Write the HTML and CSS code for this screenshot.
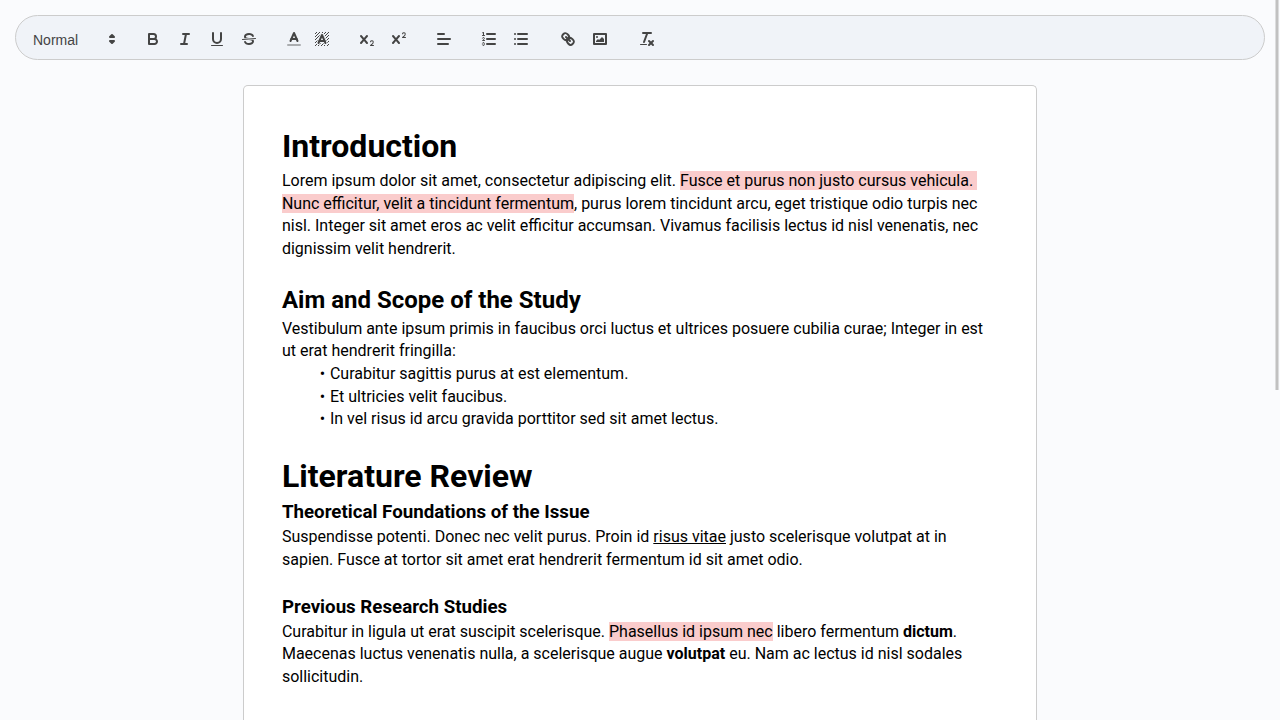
FILE: index.html
```
<!DOCTYPE html>
<html lang="en">
<head>
<meta charset="utf-8">
<title>Document editor</title>
<link rel="stylesheet" href="styles.css">
</head>
<body>
<div class="toolbar">
  <span class="group">
    <span class="picker header-picker"><span class="picker-text">Normal</span><svg viewBox="0 0 18 18"><polygon class="st" points="7 11 9 13 11 11 7 11"/><polygon class="st" points="7 7 9 5 11 7 7 7"/></svg></span>
  </span>
  <span class="group">
    <button class="tool" aria-label="Bold"><svg viewBox="0 0 18 18"><path class="st" d="M5,4H9.5A2.5,2.5,0,0,1,12,6.5v0A2.5,2.5,0,0,1,9.5,9H5A0,0,0,0,1,5,9V4A0,0,0,0,1,5,4Z"/><path class="st" d="M5,9h5.5A2.5,2.5,0,0,1,13,11.5v0A2.5,2.5,0,0,1,10.5,14H5a0,0,0,0,1,0,0V9A0,0,0,0,1,5,9Z"/></svg></button>
    <button class="tool" aria-label="Italic"><svg viewBox="0 0 18 18"><line class="st" x1="7" x2="13" y1="4" y2="4"/><line class="st" x1="5" x2="11" y1="14" y2="14"/><line class="st" x1="8" x2="10" y1="14" y2="4"/></svg></button>
    <button class="tool" aria-label="Underline"><svg viewBox="0 0 18 18"><path class="st" d="M5,3V9a4.012,4.012,0,0,0,4,4H9a4.012,4.012,0,0,0,4-4V3"/><rect class="fl" height="1" rx="0.5" ry="0.5" width="12" x="3" y="15"/></svg></button>
    <button class="tool" aria-label="Strike"><svg viewBox="0 0 18 18"><line class="st thin" x1="15.5" x2="2.5" y1="8.5" y2="9.5"/><path class="fl" d="M9.007,8C6.542,7.791,6,7.519,6,6.5,6,5.792,7.283,5,9,5c1.571,0,2.765.679,2.969,1.309a1,1,0,0,0,1.9-.617C13.356,4.106,11.354,3,9,3,6.2,3,4,4.538,4,6.5a3.2,3.2,0,0,0,.5,1.843Z"/><path class="fl" d="M8.984,10C11.457,10.208,12,10.479,12,11.5c0,0.708-1.283,1.5-3,1.5-1.571,0-2.765-.679-2.969-1.309a1,1,0,1,0-1.9.617C4.644,13.894,6.646,15,9,15c2.8,0,5-1.538,5-3.5a3.2,3.2,0,0,0-.5-1.843Z"/></svg></button>
  </span>
  <span class="group">
    <span class="picker icon-picker"><svg viewBox="0 0 18 18"><line class="st faint" x1="3" x2="15" y1="15" y2="15"/><polyline class="st" points="5.5 11 9 3 12.5 11"/><line class="st" x1="11.63" x2="6.38" y1="9" y2="9"/></svg></span>
    <span class="picker icon-picker"><svg viewBox="0 0 18 18"><defs><pattern id="hatch" width="3" height="3" patternUnits="userSpaceOnUse"><path class="fl" d="M0,2h1v1h-1zM1,1h1v1h-1zM2,0h1v1h-1z"/></pattern><mask id="halo"><rect width="18" height="18" fill="white"/><path d="M5.5,13L9,5L12.5,13M11.63,11H6.38" fill="none" stroke="black" stroke-width="4" stroke-linecap="round" stroke-linejoin="round"/></mask></defs><rect x="2" y="2" width="14" height="14" fill="url(#hatch)" mask="url(#halo)"/><polyline class="st" points="5.5 13 9 5 12.5 13"/><line class="st" x1="11.63" x2="6.38" y1="11" y2="11"/></svg></span>
  </span>
  <span class="group">
    <button class="tool" aria-label="Subscript"><svg viewBox="0 0 18 18"><path class="fl" d="M15.5,15H13.861a3.858,3.858,0,0,0,1.914-2.975,1.8,1.8,0,0,0-1.6-1.751A1.921,1.921,0,0,0,12.021,11.7a0.5,0.5,0,1,0,.957.291h0a0.914,0.914,0,0,1,1.053-.725,0.81,0.81,0,0,1,.744.762c0,1.076-1.17,1.87-1.94,2.431A1.456,1.456,0,0,0,12,15.5a0.5,0.5,0,0,0,.5.5h3A0.5,0.5,0,0,0,15.5,15Z"/><path class="fl" d="M9.65,5.241a1,1,0,0,0-1.409.108L6,7.964,3.759,5.349A1,1,0,0,0,2.192,6.592Q2.215,6.621,2.241,6.649L4.684,9.5,2.241,12.35A1,1,0,0,0,3.71,13.707q0.026-.028.049-0.057L6,11.036,8.241,13.65a1,1,0,1,0,1.567-1.243Q9.785,12.378,9.759,12.35L7.316,9.5,9.759,6.651A1,1,0,0,0,9.65,5.241Z"/></svg></button>
    <button class="tool" aria-label="Superscript"><svg viewBox="0 0 18 18"><path class="fl" d="M15.5,7H13.861a4.015,4.015,0,0,0,1.914-2.975,1.8,1.8,0,0,0-1.6-1.751A1.922,1.922,0,0,0,12.021,3.7a0.5,0.5,0,1,0,.957.291,0.917,0.917,0,0,1,1.053-.725,0.81,0.81,0,0,1,.744.762c0,1.077-1.164,1.925-1.934,2.486A1.423,1.423,0,0,0,12,7.5a0.5,0.5,0,0,0,.5.5h3A0.5,0.5,0,0,0,15.5,7Z"/><path class="fl" d="M9.65,5.241a1,1,0,0,0-1.409.108L6,7.964,3.759,5.349A1,1,0,0,0,2.192,6.592Q2.215,6.621,2.241,6.649L4.684,9.5,2.241,12.35A1,1,0,0,0,3.71,13.707q0.026-.028.049-0.057L6,11.036,8.241,13.65a1,1,0,1,0,1.567-1.243Q9.785,12.378,9.759,12.35L7.316,9.5,9.759,6.651A1,1,0,0,0,9.65,5.241Z"/></svg></button>
  </span>
  <span class="group">
    <span class="picker icon-picker"><svg viewBox="0 0 18 18"><line class="st" x1="3" x2="15" y1="9" y2="9"/><line class="st" x1="3" x2="13" y1="14" y2="14"/><line class="st" x1="3" x2="9" y1="4" y2="4"/></svg></span>
  </span>
  <span class="group">
    <button class="tool" aria-label="Numbered list"><svg viewBox="0 0 18 18"><line class="st" x1="7" x2="15" y1="4" y2="4"/><line class="st" x1="7" x2="15" y1="9" y2="9"/><line class="st" x1="7" x2="15" y1="14" y2="14"/><line class="st thin" x1="2.5" x2="4.5" y1="5.5" y2="5.5"/><path class="fl" d="M3.5,6A0.5,0.5,0,0,1,3,5.5V3.085l-0.276.138A0.5,0.5,0,0,1,2.053,3c-0.124-.247-0.023-0.324.224-0.447l1-.5A0.5,0.5,0,0,1,4,2.5v3A0.5,0.5,0,0,1,3.5,6Z"/><path class="st thin" d="M4.5,10.5h-2c0-.234,1.85-1.076,1.85-2.234A0.959,0.959,0,0,0,2.5,8.156"/><path class="st thin" d="M2.5,14.846a0.959,0.959,0,0,0,1.85-.109A0.7,0.7,0,0,0,3.75,14a0.688,0.688,0,0,0,.6-0.736,0.959,0.959,0,0,0-1.85-.109"/></svg></button>
    <button class="tool" aria-label="Bulleted list"><svg viewBox="0 0 18 18"><line class="st" x1="6" x2="15" y1="4" y2="4"/><line class="st" x1="6" x2="15" y1="9" y2="9"/><line class="st" x1="6" x2="15" y1="14" y2="14"/><line class="st" x1="3" x2="3" y1="4" y2="4"/><line class="st" x1="3" x2="3" y1="9" y2="9"/><line class="st" x1="3" x2="3" y1="14" y2="14"/></svg></button>
  </span>
  <span class="group">
    <button class="tool" aria-label="Link"><svg viewBox="0 0 18 18"><line class="st" x1="7" x2="11" y1="7" y2="11"/><path class="st" d="M8.9,4.577a3.476,3.476,0,0,1,.36,4.679A3.476,3.476,0,0,1,4.577,8.9C3.185,7.5,2.035,6.4,4.217,4.217S7.5,3.185,8.9,4.577Z"/><path class="st" d="M13.423,9.1a3.476,3.476,0,0,0-4.679-.36,3.476,3.476,0,0,0,.36,4.679c1.392,1.392,2.5,2.542,4.679.36S14.815,10.5,13.423,9.1Z"/></svg></button>
    <button class="tool" aria-label="Image"><svg viewBox="0 0 18 18"><rect class="st" height="10" width="12" x="3" y="4"/><circle class="fl" cx="6" cy="7" r="1"/><polyline class="fl" points="5 12 5 11 7 9 8 10 11 7 13 9 13 12 5 12"/></svg></button>
  </span>
  <span class="group">
    <button class="tool" aria-label="Clear formatting"><svg viewBox="0 0 18 18"><line class="st" x1="5" x2="13" y1="3" y2="3"/><line class="st" x1="6" x2="9.35" y1="12" y2="3"/><line class="st" x1="11" x2="15" y1="11" y2="15"/><line class="st" x1="15" x2="11" y1="11" y2="15"/><rect class="fl" height="1" rx="0.5" ry="0.5" width="7" x="2" y="14"/></svg></button>
  </span>
</div>
<main class="page">
  <h1>Introduction</h1>
  <p>Lorem ipsum dolor sit amet, consectetur adipiscing elit. <span class="mark">Fusce et purus non justo cursus vehicula. Nunc efficitur, velit a tincidunt fermentum</span>, purus lorem tincidunt arcu, eget tristique odio turpis nec nisl. Integer sit amet eros ac velit efficitur accumsan. Vivamus facilisis lectus id nisl venenatis, nec dignissim velit hendrerit.</p>
  <p><br></p>
  <h2>Aim and Scope of the Study</h2>
  <p>Vestibulum ante ipsum primis in faucibus orci luctus et ultrices posuere cubilia curae; Integer in est ut erat hendrerit fringilla:</p>
  <ul>
    <li>Curabitur sagittis purus at est elementum.</li>
    <li>Et ultricies velit faucibus.</li>
    <li>In vel risus id arcu gravida porttitor sed sit amet lectus.</li>
  </ul>
  <p><br></p>
  <h1>Literature Review</h1>
  <h3>Theoretical Foundations of the Issue</h3>
  <p>Suspendisse potenti. Donec nec velit purus. Proin id <u>risus vitae</u> justo scelerisque volutpat at in sapien. Fusce at tortor sit amet erat hendrerit fermentum id sit amet odio.</p>
  <p><br></p>
  <h3>Previous Research Studies</h3>
  <p>Curabitur in ligula ut erat suscipit scelerisque. <span class="mark">Phasellus id ipsum nec</span> libero fermentum <strong>dictum</strong>. Maecenas luctus venenatis nulla, a scelerisque augue <strong>volutpat</strong> eu. Nam ac lectus id nisl sodales sollicitudin.</p>
</main>
<div class="scroll-thumb"></div>
</body>
</html>
```
FILE: styles.css
```
* {
  box-sizing: border-box;
}

html,
body {
  height: 100%;
}

body {
  display: flex;
  flex-direction: column;
  margin: 0;
  padding: 15px 15px 0;
  overflow: hidden;
  background: #fafbfd;
  color: #000;
  font-family: Roboto, sans-serif;
}

.toolbar {
  display: flex;
  flex: none;
  height: 45px;
  padding: 11px 8px 8px;
  border: 1px solid #ccc;
  border-radius: 25px;
  background: #f0f3f8;
  color: #444;
  font-family: "Liberation Sans", Arial, sans-serif;
}

.group {
  display: flex;
  margin-right: 15px;
}

.tool {
  width: 28px;
  height: 24px;
  margin: 0 2px;
  padding: 3px 5px;
  border: 0;
  background: none;
}

.toolbar svg {
  display: block;
  width: 18px;
  height: 18px;
}

.picker {
  display: flex;
  align-items: center;
  height: 24px;
}

.header-picker {
  width: 98px;
  justify-content: space-between;
  padding: 0 1px 0 9px;
  font-size: 14px;
  font-weight: 500;
}

.picker-text {
  padding-top: 2px;
  line-height: 22px;
}

.icon-picker {
  width: 28px;
  justify-content: center;
}

.st {
  fill: none;
  stroke: #444;
  stroke-width: 2;
  stroke-linecap: round;
  stroke-linejoin: round;
}

.thin {
  stroke-width: 1;
}

.faint {
  opacity: 0.4;
}

.fl {
  fill: #444;
}

.page {
  flex: 1;
  width: 21cm;
  margin: 25px auto 0;
  padding: 38.42px 1cm 0;
  border: 1px solid #ccc;
  border-bottom: 0;
  border-radius: 5px 5px 0 0;
  background: #fff;
  font-size: 16px;
  line-height: 1.42;
}

.page h1,
.page h2,
.page h3,
.page p,
.page ul {
  margin: 0;
  padding: 0;
}

.page p,
.page li {
  white-space: pre-wrap;
}

.page h1 {
  font-size: 2em;
}

.page h2 {
  font-size: 1.5em;
}

.page h3 {
  font-size: 1.17em;
}

.page ul {
  padding-left: 1.5em;
  list-style: none;
}

.page li {
  padding-left: 1.5em;
}

.page li::before {
  content: "\2022";
  display: inline-block;
  width: 1.2em;
  margin-left: -1.5em;
  margin-right: 0.3em;
  text-align: right;
  white-space: nowrap;
}

.mark {
  background: #facccc;
}

.scroll-thumb {
  position: absolute;
  top: 0;
  right: 1px;
  width: 4px;
  height: 390px;
  border: 1px solid #dcddde;
  border-width: 0 1px;
  background: #c1c1c1;
}
```
